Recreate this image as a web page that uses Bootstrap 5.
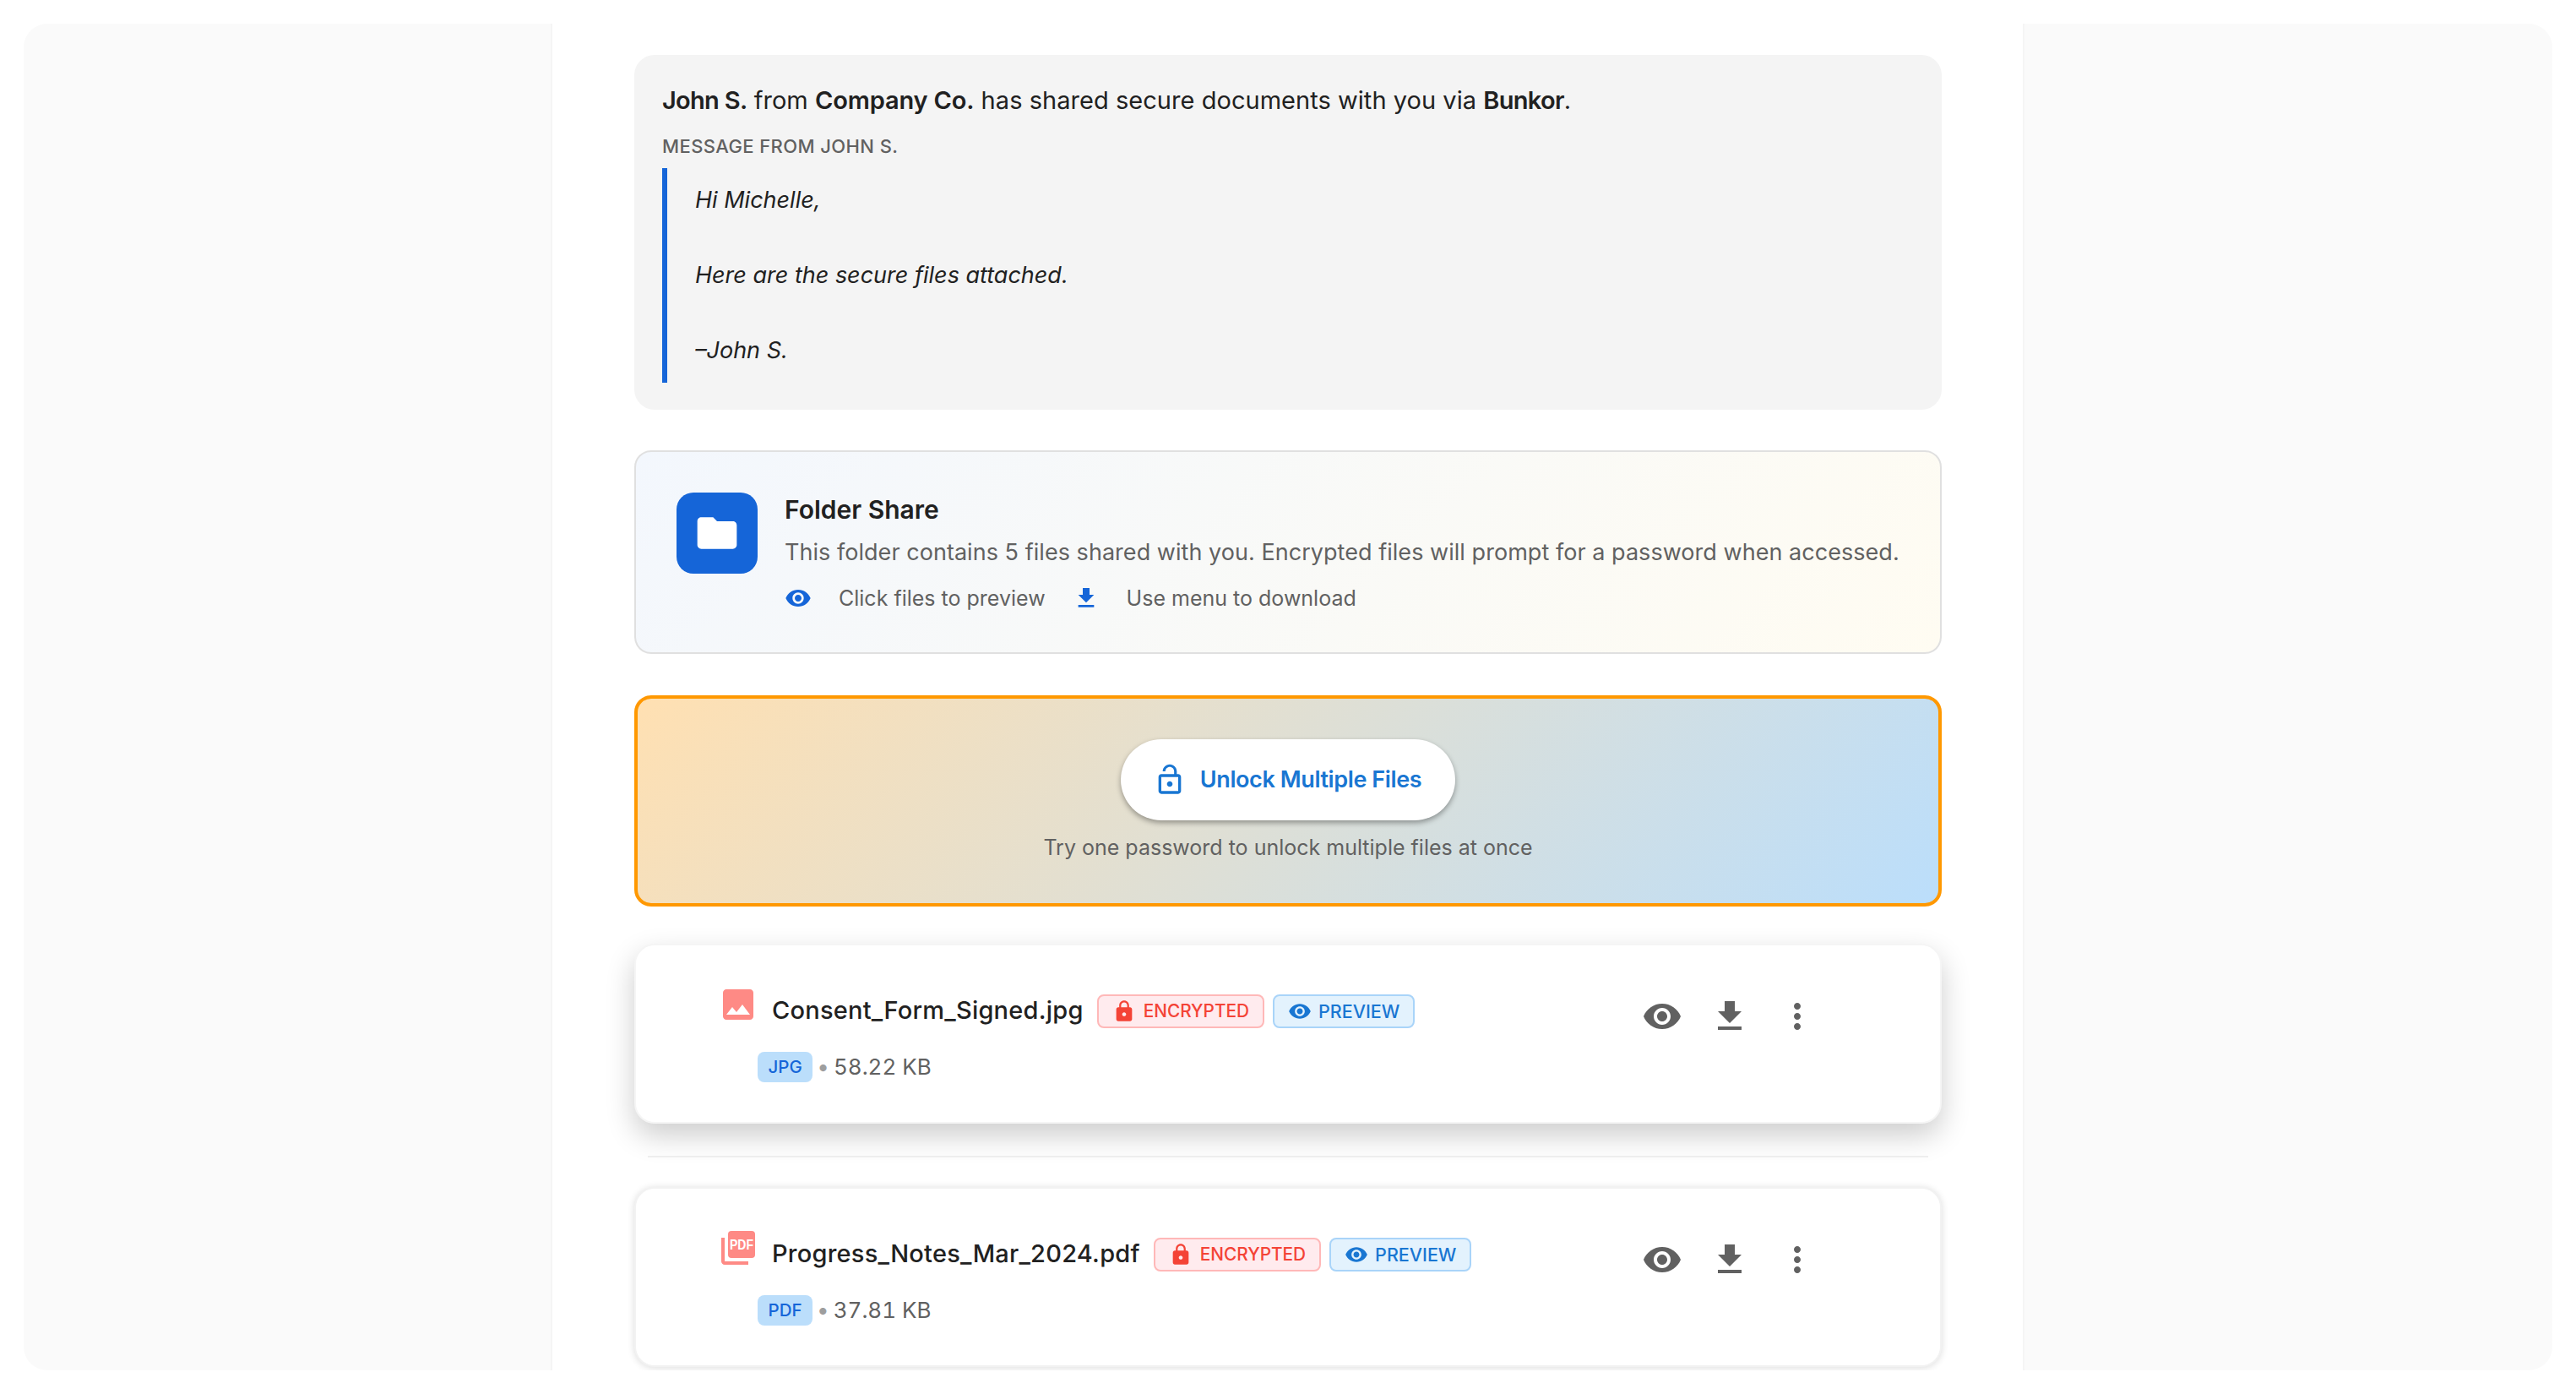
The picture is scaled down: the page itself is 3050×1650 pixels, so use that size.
<!DOCTYPE html>
<html lang="en">
<head>
    <meta charset="UTF-8" />
    <meta name="viewport" content="width=device-width, initial-scale=1.0"/>
    <title>Bunkor - Shared Folder</title>
    <link href="https://cdn.jsdelivr.net/npm/bootstrap@5.3.0/dist/css/bootstrap.min.css" rel="stylesheet"/>
    <style>
        html, body { height: 100%; background: #fff; overflow: hidden; }
        body { font-family: "Inter", "Liberation Sans", sans-serif; color: #212121; padding: 28px; }
        .app-frame { height: 1594px; border-radius: 28px; overflow: hidden; }
        .side-panel { flex: none; background: #fafafa; }
        .side-left { width: 626px; border-right: 2px solid #f5f5f5; }
        .side-right { width: 627px; border-left: 2px solid #f5f5f5; }
        .center-col { flex: 1 1 auto; min-width: 0; padding: 37px 96px 0 97px; background: #fff; }

        .msg-box { background: #f4f4f4; border-radius: 24px; padding: 32px 33px; height: 420px; margin-bottom: 48px; }
        .msg-lead { font-size: 29px; letter-spacing: .04px; line-height: 44px; margin: 0 0 16px; }
        .msg-lead b { font-weight: 600; letter-spacing: -.15px; }
        .msg-lead b:first-child, .msg-lead b:last-child { letter-spacing: -.7px; }
        .msg-label { font-size: 22px; line-height: 32px; font-weight: 500; color: #616161; letter-spacing: .4px; margin-bottom: 10px; }
        .msg-quote { border-left: 6px solid #1565d8; padding: 16px 0 16px 33px; font-size: 27px; line-height: 44.4px; font-style: italic; }
        .msg-quote p { margin: 0 0 44.4px; }
        .msg-quote p:last-child { margin-bottom: 0; }

        .folder-box { height: 241px; border: 2px solid #e0e0e0; border-radius: 20px; padding: 48px; gap: 32px; margin-bottom: 49px; background: linear-gradient(135deg, #f3f7fd, #fffcf2); }
        .folder-ico { width: 96px; height: 96px; flex: none; border-radius: 20px; background: #1565d8; }
        .folder-title { font-size: 30px; line-height: 40px; font-weight: 600; }
        .folder-desc { font-size: 27px; letter-spacing: .04px; line-height: 44px; color: #616161; margin-top: 9px; white-space: nowrap; }
        .folder-hints { font-size: 25px; line-height: 40px; color: #616161; gap: 32px; margin-top: 12px; }
        .folder-hints svg { width: 32px; height: 32px; fill: #1565d8; }

        .unlock-box { height: 250px; border: 4px solid #ff9800; border-radius: 20px; padding-top: 48px; margin-bottom: 44px; background: linear-gradient(135deg, #ffe0b2, #bbdefb); }
        .unlock-btn { height: 96px; padding: 0 40px 0 38px; gap: 16px; border-radius: 48px; border: 0; background: #fff; color: #1976d2; font-size: 27px; letter-spacing: -.4px; font-weight: 600; box-shadow: 0 3px 6px rgba(0,0,0,.35); }
        .unlock-btn:hover { background: #fff; color: #1976d2; }
        .unlock-btn svg { width: 40px; height: 40px; fill: currentColor; }
        .unlock-sub { font-size: 25px; line-height: 40px; color: #616161; margin-top: 12px; }

        .file-row { height: 213px; border: 2px solid #f2f2f2; border-radius: 24px; background: #fff; box-shadow: 0 1px 8px rgba(0,0,0,.14); padding: 46px 129px 0 97px; }
        .file-row.is-hover { box-shadow: 0 14px 34px rgba(0,0,0,.2); border-color: #f5f5f5; }
        .file-ico { width: 48px; height: 48px; flex: none; fill: #fe8a85; }
        .file-head { gap: 16px; }
        .file-name { font-size: 29px; letter-spacing: .23px; line-height: 40px; font-weight: 500; white-space: nowrap; margin-top: 11px; }
        .tag-box { height: 40px; margin-top: 12px; padding: 0 16px; border-radius: 8px; border: 2px solid; font-weight: 500; }
        .tag-lock { background: #ffebee; border-color: #ffb8b8; color: #f44336; font-size: 20.8px; gap: 9px; }
        .tag-view { background: #e3f2fd; border-color: #a9d4f9; color: #1976d2; font-size: 21.5px; gap: 8px; margin-left: -6px; }
        .tag-box svg { width: 28px; height: 28px; fill: currentColor; }
        .file-meta { font-size: 26px; line-height: 36px; color: #616161; margin: 28px 0 0 47px; gap: 5px; font-variant-numeric: tabular-nums; }
        .type-chip { background: #bbdefb; color: #1565d8; border-radius: 8px; height: 36px; padding: 0 12.5px; font-size: 20.5px; font-weight: 500; }
        .meta-dot { color: #9e9e9e; }
        .file-actions { margin-top: -2px; }
        .act-btn { width: 80px; height: 80px; padding: 0; border: 0; }
        .act-btn svg { width: 48px; height: 48px; fill: #616161; }
        .list-sep { height: 2px; background: #eee; margin: 38px 16px 35px; }
    </style>
</head>
<body>
<svg width="0" height="0" class="position-absolute">
    <symbol id="i-eye" viewBox="0 0 24 24"><path d="M12 4.5C7 4.5 2.73 7.61 1 12c1.73 4.39 6 7.5 11 7.5s9.27-3.11 11-7.5c-1.73-4.39-6-7.5-11-7.5zM12 17c-2.76 0-5-2.24-5-5s2.24-5 5-5 5 2.24 5 5-2.24 5-5 5zm0-8c-1.66 0-3 1.34-3 3s1.34 3 3 3 3-1.34 3-3-1.34-3-3-3z"/></symbol>
    <symbol id="i-down" viewBox="0 0 24 24"><path d="M19 9h-4V3H9v6H5l7 7 7-7zM5 18v2h14v-2H5z"/></symbol>
    <symbol id="i-more" viewBox="0 0 24 24"><path d="M12 8c1.1 0 2-.9 2-2s-.9-2-2-2-2 .9-2 2 .9 2 2 2zm0 2c-1.1 0-2 .9-2 2s.9 2 2 2 2-.9 2-2-.9-2-2-2zm0 6c-1.1 0-2 .9-2 2s.9 2 2 2 2-.9 2-2-.9-2-2-2z"/></symbol>
    <symbol id="i-lock" viewBox="0 0 24 24"><path d="M18 8h-1V6c0-2.76-2.24-5-5-5S7 3.24 7 6v2H6c-1.1 0-2 .9-2 2v10c0 1.1.9 2 2 2h12c1.1 0 2-.9 2-2V10c0-1.1-.9-2-2-2zm-6 9c-1.1 0-2-.9-2-2s.9-2 2-2 2 .9 2 2-.9 2-2 2zm3.1-9H8.9V6c0-1.71 1.39-3.1 3.1-3.1 1.71 0 3.1 1.39 3.1 3.1v2z"/></symbol>
</svg>

<div class="app-frame d-flex">
    <div class="side-panel side-left"></div>

    <main class="center-col">
        <!-- Sender message -->
        <div class="msg-box">
            <p class="msg-lead"><b>John S.</b> from <b>Company Co.</b> has shared secure documents with you via <b>Bunkor</b>.</p>
            <div class="msg-label">MESSAGE FROM JOHN S.</div>
            <div class="msg-quote">
                <p>Hi Michelle,</p>
                <p>Here are the secure files attached.</p>
                <p>–John S.</p>
            </div>
        </div>

        <!-- Folder info -->
        <div class="folder-box d-flex align-items-start">
            <div class="folder-ico d-flex align-items-center justify-content-center">
                <svg width="56" height="56" viewBox="0 0 24 24" fill="#fff"><path d="M10 4H4c-1.1 0-2 .9-2 2v12c0 1.1.9 2 2 2h16c1.1 0 2-.9 2-2V8c0-1.1-.9-2-2-2h-8l-2-2z"/></svg>
            </div>
            <div>
                <div class="folder-title">Folder Share</div>
                <div class="folder-desc">This folder contains 5 files shared with you. Encrypted files will prompt for a password when accessed.</div>
                <div class="folder-hints d-flex align-items-center">
                    <svg><use href="#i-eye"/></svg>
                    <span>Click files to preview</span>
                    <svg><use href="#i-down"/></svg>
                    <span>Use menu to download</span>
                </div>
            </div>
        </div>

        <!-- Bulk unlock -->
        <div class="unlock-box text-center">
            <button type="button" class="btn unlock-btn d-inline-flex align-items-center">
                <svg viewBox="0 0 24 24"><path d="M12 17c1.1 0 2-.9 2-2s-.9-2-2-2-2 .9-2 2 .9 2 2 2zm6-9h-1V6c0-2.76-2.24-5-5-5S7 3.24 7 6h1.9c0-1.71 1.39-3.1 3.1-3.1 1.71 0 3.1 1.39 3.1 3.1v2H6c-1.1 0-2 .9-2 2v10c0 1.1.9 2 2 2h12c1.1 0 2-.9 2-2V10c0-1.1-.9-2-2-2zm0 12H6V10h12v10z"/></svg>
                Unlock Multiple Files
            </button>
            <div class="unlock-sub">Try one password to unlock multiple files at once</div>
        </div>

        <!-- Files -->
        <div class="file-row is-hover d-flex justify-content-between align-items-start">
            <div>
                <div class="file-head d-flex align-items-start">
                    <svg class="file-ico" viewBox="0 0 24 24"><path d="M21 19V5c0-1.1-.9-2-2-2H5c-1.100 0-2 .9-2 2v14c0 1.1.9 2 2 2h14c1.100 0 2-.9 2-2zM8.500 13.500l2.500 3.010L14.500 12l4.500 6H5l3.500-4.500z"/></svg>
                    <span class="file-name">Consent_Form_Signed.jpg</span>
                    <span class="tag-box tag-lock d-inline-flex align-items-center"><svg><use href="#i-lock"/></svg>ENCRYPTED</span>
                    <span class="tag-box tag-view d-inline-flex align-items-center"><svg><use href="#i-eye"/></svg>PREVIEW</span>
                </div>
                <div class="file-meta d-flex align-items-center">
                    <span class="type-chip d-inline-flex align-items-center">JPG</span>
                    <span class="meta-dot">•</span>
                    <span>58.22 KB</span>
                </div>
            </div>
            <div class="file-actions d-flex">
                <button type="button" class="btn act-btn"><svg><use href="#i-eye"/></svg></button>
                <button type="button" class="btn act-btn"><svg><use href="#i-down"/></svg></button>
                <button type="button" class="btn act-btn"><svg><use href="#i-more"/></svg></button>
            </div>
        </div>

        <div class="list-sep"></div>

        <div class="file-row d-flex justify-content-between align-items-start">
            <div>
                <div class="file-head d-flex align-items-start">
                    <svg class="file-ico" viewBox="0 0 24 24">
                        <rect x="6" y="2" width="16" height="16" rx="2"/>
                        <path d="M4 6H2v14c0 1.100.9 2 2 2h14v-2H4V6z"/>
                        <text x="7" y="13.100" textLength="14" lengthAdjust="spacingAndGlyphs" font-family="Liberation Sans" font-weight="700" font-size="8.500" fill="#fff">PDF</text>
                    </svg>
                    <span class="file-name">Progress_Notes_Mar_2024.pdf</span>
                    <span class="tag-box tag-lock d-inline-flex align-items-center"><svg><use href="#i-lock"/></svg>ENCRYPTED</span>
                    <span class="tag-box tag-view d-inline-flex align-items-center"><svg><use href="#i-eye"/></svg>PREVIEW</span>
                </div>
                <div class="file-meta d-flex align-items-center">
                    <span class="type-chip d-inline-flex align-items-center">PDF</span>
                    <span class="meta-dot">•</span>
                    <span>37.81 KB</span>
                </div>
            </div>
            <div class="file-actions d-flex">
                <button type="button" class="btn act-btn"><svg><use href="#i-eye"/></svg></button>
                <button type="button" class="btn act-btn"><svg><use href="#i-down"/></svg></button>
                <button type="button" class="btn act-btn"><svg><use href="#i-more"/></svg></button>
            </div>
        </div>
    </main>

    <div class="side-panel side-right"></div>
</div>

<script src="https://cdn.jsdelivr.net/npm/bootstrap@5.3.0/dist/js/bootstrap.bundle.min.js"></script>
</body>
</html>
